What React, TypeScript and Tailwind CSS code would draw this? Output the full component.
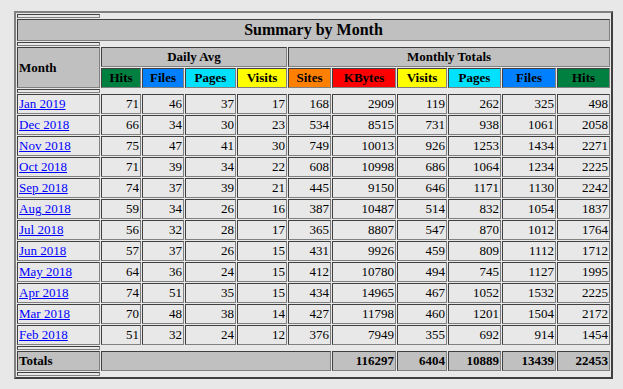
import React from 'react';

const rows: [string, number[]][] = [
  ['Jan 2019', [71, 46, 37, 17, 168, 2909, 119, 262, 325, 498]],
  ['Dec 2018', [66, 34, 30, 23, 534, 8515, 731, 938, 1061, 2058]],
  ['Nov 2018', [75, 47, 41, 30, 749, 10013, 926, 1253, 1434, 2271]],
  ['Oct 2018', [71, 39, 34, 22, 608, 10998, 686, 1064, 1234, 2225]],
  ['Sep 2018', [74, 37, 39, 21, 445, 9150, 646, 1171, 1130, 2242]],
  ['Aug 2018', [59, 34, 26, 16, 387, 10487, 514, 832, 1054, 1837]],
  ['Jul 2018', [56, 32, 28, 17, 365, 8807, 547, 870, 1012, 1764]],
  ['Jun 2018', [57, 37, 26, 15, 431, 9926, 459, 809, 1112, 1712]],
  ['May 2018', [64, 36, 24, 15, 412, 10780, 494, 745, 1127, 1995]],
  ['Apr 2018', [74, 51, 35, 15, 434, 14965, 467, 1052, 1532, 2225]],
  ['Mar 2018', [70, 48, 38, 14, 427, 11798, 460, 1201, 1504, 2172]],
  ['Feb 2018', [51, 32, 24, 12, 376, 7949, 355, 692, 914, 1454]],
];

const colWidths = ['w-[83px]', 'w-[40px]', 'w-[42px]', 'w-[51px]', 'w-[50px]', 'w-[43px]', 'w-[64px]', 'w-[50px]', 'w-[53px]', 'w-[54px]', 'w-[53px]'];

const headers = [
  { label: 'Hits', bg: 'bg-[#008040]' },
  { label: 'Files', bg: 'bg-[#0080ff]' },
  { label: 'Pages', bg: 'bg-[#00e0ff]' },
  { label: 'Visits', bg: 'bg-[#ffff00]' },
  { label: 'Sites', bg: 'bg-[#ff8000]' },
  { label: 'KBytes', bg: 'bg-[#ff0000]' },
  { label: 'Visits', bg: 'bg-[#ffff00]' },
  { label: 'Pages', bg: 'bg-[#00e0ff]' },
  { label: 'Files', bg: 'bg-[#0080ff]' },
  { label: 'Hits', bg: 'bg-[#008040]' },
];

// inset cell border, like the old border=2 tables
const cell = 'border border-solid border-t-[#404040] border-l-[#404040] border-r-[#808080] border-b-[#808080] p-px';
const txt = 'text-[13px] leading-[16px]';

function Spacer() {
  return (
    <tr>
      <th className={`${cell} h-[4px]`}></th>
    </tr>
  );
}

export default function App() {
  return (
    <div className="min-h-screen bg-[#e8e8e8] pt-[11px] pl-[14px] font-['Liberation_Serif',serif] text-black">
      <table className="table-fixed w-[599px] border-separate border-spacing-[1px] border-2 border-solid border-t-[#808080] border-l-[#808080] border-r-[#404040] border-b-[#404040]">
        <colgroup>
          {colWidths.map((w, i) => (
            <col key={i} className={w} />
          ))}
        </colgroup>
        <tbody>
          <Spacer />
          <tr>
            <th colSpan={11} className={`${cell} bg-[#c0c0c0] text-center text-[16px] leading-[18px] font-bold`}>
              Summary by Month
            </th>
          </tr>
          <Spacer />
          <tr>
            <th rowSpan={2} className={`${cell} ${txt} bg-[#c0c0c0] text-left align-middle font-bold`}>Month</th>
            <th colSpan={4} className={`${cell} ${txt} bg-[#c0c0c0] text-center font-bold`}>Daily Avg</th>
            <th colSpan={6} className={`${cell} ${txt} bg-[#c0c0c0] text-center font-bold`}>Monthly Totals</th>
          </tr>
          <tr>
            {headers.map((h, i) => (
              <th key={i} className={`${cell} ${txt} ${h.bg} text-center font-bold`}>
                {h.label}
              </th>
            ))}
          </tr>
          <Spacer />
          {rows.map(([month, vals]) => (
            <tr key={month}>
              <td className={`${cell} ${txt} text-left whitespace-nowrap`}>
                <a href="#" className="text-[#0000ff] underline">{month}</a>
              </td>
              {vals.map((v, i) => (
                <td key={i} className={`${cell} ${txt} text-right whitespace-nowrap`}>
                  {v}
                </td>
              ))}
            </tr>
          ))}
          <Spacer />
          <tr>
            <th className={`${cell} ${txt} bg-[#c0c0c0] text-left font-bold`}>Totals</th>
            <th colSpan={5} className={`${cell} ${txt} bg-[#c0c0c0]`}></th>
            {[116297, 6404, 10889, 13439, 22453].map((v, i) => (
              <th key={i} className={`${cell} ${txt} bg-[#c0c0c0] text-right font-bold`}>
                {v}
              </th>
            ))}
          </tr>
          <Spacer />
        </tbody>
      </table>
    </div>
  );
}
